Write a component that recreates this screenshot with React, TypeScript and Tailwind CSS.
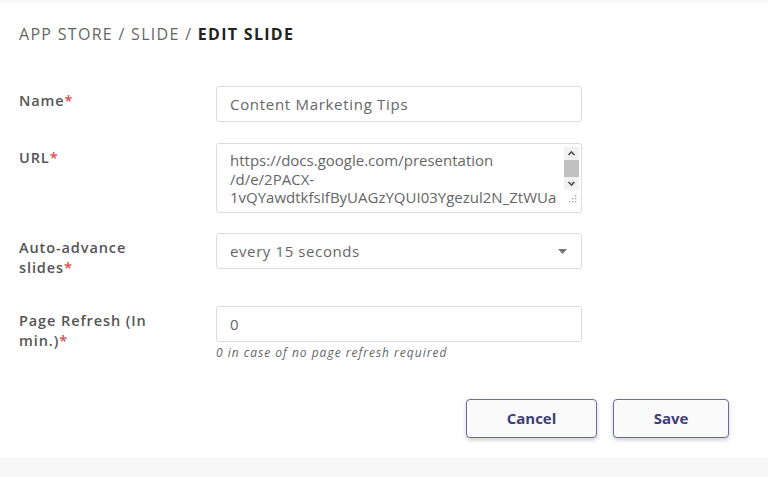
import React from "react";

function Label({ children }: { children: React.ReactNode }) {
  return (
    <div className="w-[197px] shrink-0 pt-[5px]">
      <div className="w-[170px] text-[14.5px] leading-[20px] font-semibold text-[#555] tracking-[0.9px]">
        {children}
        <span className="text-[#e0474c]">*</span>
      </div>
    </div>
  );
}

export default function App() {
  return (
    <div
      className="w-[768px] h-[477px] bg-[#f7f7f7] flex flex-col"
      style={{ fontFamily: "'Open Sans', Lato, sans-serif" }}
    >
      <div className="h-[3px] shrink-0" />
      <div className="bg-white h-[455px] shrink-0 px-[19px] pt-[21px]">
        <div className="text-[16px] leading-[20px] tracking-[1.3px] text-[#666]">
          APP STORE / SLIDE / <span className="font-bold text-[#222]">EDIT SLIDE</span>
        </div>

        <div className="mt-[42px] flex items-start">
          <Label>Name</Label>
          <div className="w-[366px] h-[36px] border border-[#ddd] rounded-[3px] px-[13px] flex items-center text-[15px] tracking-[0.7px] text-[#666]">
            Content Marketing Tips
          </div>
        </div>

        <div className="mt-[21px] flex items-start">
          <Label>URL</Label>
          <div className="w-[366px] h-[70px] border border-[#ddd] rounded-[3px] flex">
            <div className="flex-1 pl-[13px] pt-[7px] text-[15px] leading-[18.5px] tracking-[0px] text-[#666] overflow-hidden whitespace-nowrap">
              https://docs.google.com/presentation
              <br />/d/e/2PACX-
              <br />1vQYawdtkfsIfByUAGzYQUI03Ygezul2N_ZtWUa
            </div>
            <div className="w-[16px] shrink-0 flex flex-col items-center pt-[3px] mr-[2px]">
              <div className="w-[15px] bg-[#f1f1f1] flex flex-col items-center">
                <svg width="15" height="13" viewBox="0 0 15 13">
                  <path d="M4.5 8 L7.5 5 L10.5 8" fill="none" stroke="#505050" strokeWidth="1.6" />
                </svg>
                <div className="w-[15px] h-[17px] bg-[#c1c1c1]" />
                <svg width="15" height="13" viewBox="0 0 15 13">
                  <path d="M4.5 5 L7.5 8 L10.5 5" fill="none" stroke="#505050" strokeWidth="1.6" />
                </svg>
              </div>
              <svg width="10" height="10" viewBox="0 0 10 10" className="mt-[4px] ml-[4px]">
                <g fill="#999">
                  <rect x="7" y="1" width="1.3" height="1.3" />
                  <rect x="4" y="4" width="1.3" height="1.3" />
                  <rect x="7" y="4" width="1.3" height="1.3" />
                  <rect x="1" y="7" width="1.3" height="1.3" />
                  <rect x="4" y="7" width="1.3" height="1.3" />
                  <rect x="7" y="7" width="1.3" height="1.3" />
                </g>
              </svg>
            </div>
          </div>
        </div>

        <div className="mt-[20px] flex items-start">
          <Label>
            Auto-advance
            <br />
            slides
          </Label>
          <div className="w-[366px] h-[36px] border border-[#ddd] rounded-[3px] pl-[13px] pr-[14px] flex items-center justify-between text-[15px] tracking-[0.6px] text-[#666]">
            <span>every 15 seconds</span>
            <svg width="9" height="5" viewBox="0 0 9 5">
              <path d="M0 0 L9 0 L4.5 5 Z" fill="#777" />
            </svg>
          </div>
        </div>

        <div className="mt-[28px] flex items-start">
          <Label>
            Page Refresh (In
            <br />
            min.)
          </Label>
          <div className="w-[366px]">
            <div className="h-[36px] border border-[#ddd] rounded-[3px] px-[13px] flex items-center text-[15px] text-[#666]">
              0
            </div>
            <div className="mt-[4px] text-[12px] leading-[14px] italic text-[#666] tracking-[1px]">
              0 in case of no page refresh required
            </div>
          </div>
        </div>

        <div className="mt-[39px] flex justify-end gap-[16px] pr-[20px]">
          <button className="w-[131px] h-[39px] rounded-[4px] border border-[#6b6aa3] bg-[#fafafa] text-[15px] font-bold text-[#3f3d78] shadow-[0_2px_4px_rgba(0,0,0,0.2)]">
            Cancel
          </button>
          <button className="w-[116px] h-[39px] rounded-[4px] border border-[#6b6aa3] bg-[#fafafa] text-[15px] font-bold text-[#3f3d78] shadow-[0_2px_4px_rgba(0,0,0,0.2)]">
            Save
          </button>
        </div>
      </div>
    </div>
  );
}
